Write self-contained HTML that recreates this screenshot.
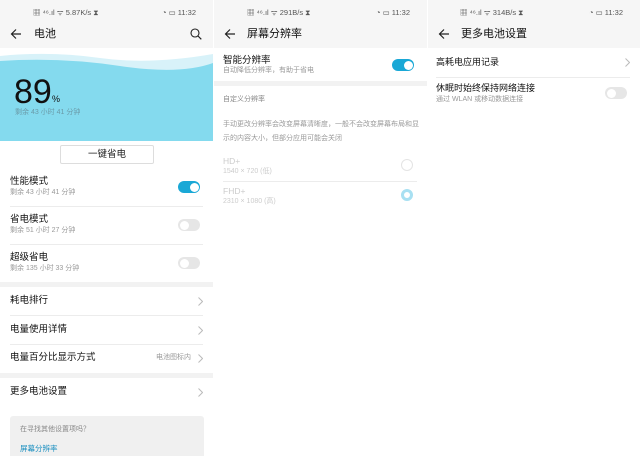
<!DOCTYPE html>
<html><head><meta charset="utf-8"><style>
*{margin:0;padding:0;box-sizing:border-box}
body{width:640px;height:456px;overflow:hidden;background:#fff;font-family:"Liberation Sans","Noto Sans CJK SC",sans-serif;position:relative}
.p{position:absolute;top:0;height:456px;overflow:hidden;background:#fff}
.a{position:absolute;white-space:nowrap;line-height:1.2}
.sb{position:absolute;left:0;right:0;top:0;height:48px;background:#f6f6f6}
.st{font-size:7.5px;color:#555;top:8px}
.t{font-size:9.5px;color:#111}
.s{font-size:7px;color:#999}
.hd{font-size:11px;color:#111;top:28px}
.tg{position:absolute;width:22px;height:12px;border-radius:6px;background:#1aa8d6}
.tg:after{content:"";position:absolute;right:1.5px;top:1.5px;width:9px;height:9px;border-radius:50%;background:#fff}
.tg.off{background:#e6e6e6}
.tg.off:after{right:auto;left:1.5px}
.ln{position:absolute;height:1px;background:#ececec}
.band{position:absolute;left:0;right:0;height:5px;background:#f2f2f2}
.ch{position:absolute;width:5px;height:9px}
.back{position:absolute;left:10px;top:28px;width:12px;height:12px}
</style></head><body>

<!-- Panel 1 -->
<div class="p" style="left:0;width:213px">
<div class="sb"></div>
<div class="a st" style="left:33px">▦ ⁴⁶.ıl ᯤ 5.87K/s ⧗</div>
<div class="a st" style="left:162px">◔ ▭ 11:32</div>
<svg class="back" viewBox="0 0 12 12"><path d="M11 6H1.5M6 1.5L1.5 6 6 10.5" stroke="#222" stroke-width="1.2" fill="none"/></svg>
<div class="a hd" style="left:34px">电池</div>
<svg class="a" style="left:190px;top:28px" width="12" height="12" viewBox="0 0 12 12"><circle cx="5" cy="5" r="4" stroke="#222" stroke-width="1.1" fill="none"/><path d="M8 8l3.3 3.3" stroke="#222" stroke-width="1.2"/></svg>
<svg class="a" style="left:0;top:48px" width="213" height="93" viewBox="0 0 213 93"><rect width="213" height="93" fill="#fff"/><path d="M0 8 Q50 3 100 10 T213 6 V93 H0Z" fill="#d8f2f9"/><path d="M0 13 Q60 9 120 18 T213 15 V93 H0Z" fill="#84daee"/></svg>
<div class="a" style="left:14px;top:72px;font-size:34px;color:#111;line-height:40px">89</div>
<div class="a" style="left:52px;top:94px;font-size:9px;color:#111">%</div>
<div class="a s" style="left:15px;top:109px;color:#6a9aa8">剩余 43 小时 41 分钟</div>
<div class="a" style="left:60px;top:145px;width:94px;height:19px;border:1px solid #ddd;border-radius:2px;font-size:9.5px;text-align:center;line-height:17px;color:#222">一键省电</div>
<div class="a t" style="left:10px;top:176px">性能模式</div><div class="a s" style="left:10px;top:189px">剩余 43 小时 41 分钟</div><div class="tg" style="left:178px;top:181px"></div>
<div class="ln" style="left:10px;right:10px;top:206px"></div>
<div class="a t" style="left:10px;top:214px">省电模式</div><div class="a s" style="left:10px;top:227px">剩余 51 小时 27 分钟</div><div class="tg off" style="left:178px;top:219px"></div>
<div class="ln" style="left:10px;right:10px;top:244px"></div>
<div class="a t" style="left:10px;top:252px">超级省电</div><div class="a s" style="left:10px;top:265px">剩余 135 小时 33 分钟</div><div class="tg off" style="left:178px;top:257px"></div>
<div class="band" style="top:282px"></div>
<div class="a t" style="left:10px;top:295px">耗电排行</div><svg class="ch" style="left:198px;top:297px" viewBox="0 0 5 9"><path d="M.5 .5L4.5 4.5.5 8.5" stroke="#bbb" fill="none"/></svg>
<div class="ln" style="left:10px;right:10px;top:315px"></div>
<div class="a t" style="left:10px;top:324px">电量使用详情</div><svg class="ch" style="left:198px;top:326px" viewBox="0 0 5 9"><path d="M.5 .5L4.5 4.5.5 8.5" stroke="#bbb" fill="none"/></svg>
<div class="ln" style="left:10px;right:10px;top:344px"></div>
<div class="a t" style="left:10px;top:352px">电量百分比显示方式</div><div class="a s" style="left:156px;top:354px">电池图标内</div><svg class="ch" style="left:198px;top:354px" viewBox="0 0 5 9"><path d="M.5 .5L4.5 4.5.5 8.5" stroke="#bbb" fill="none"/></svg>
<div class="band" style="top:373px"></div>
<div class="a t" style="left:10px;top:386px">更多电池设置</div><svg class="ch" style="left:198px;top:388px" viewBox="0 0 5 9"><path d="M.5 .5L4.5 4.5.5 8.5" stroke="#bbb" fill="none"/></svg>
<div class="a" style="left:10px;top:416px;width:194px;height:45px;background:#f0f0f0;border-radius:3px"></div>
<div class="a s" style="left:20px;top:426px;color:#888">在寻找其他设置项吗？</div>
<div class="a" style="left:20px;top:444px;font-size:7.5px;color:#1a8fc0">屏幕分辨率</div>
</div>

<!-- Panel 2 -->
<div class="p" style="left:214px;width:213px">
<div class="sb"></div>
<div class="a st" style="left:33px">▦ ⁴⁶.ıl ᯤ 291B/s ⧗</div>
<div class="a st" style="left:162px">◔ ▭ 11:32</div>
<svg class="back" viewBox="0 0 12 12"><path d="M11 6H1.5M6 1.5L1.5 6 6 10.5" stroke="#222" stroke-width="1.2" fill="none"/></svg>
<div class="a hd" style="left:33px">屏幕分辨率</div>
<div class="a t" style="left:9px;top:55px">智能分辨率</div><div class="a s" style="left:9px;top:67px">自动降低分辨率，有助于省电</div><div class="tg" style="left:178px;top:59px"></div>
<div class="band" style="top:81px"></div>
<div class="a s" style="left:9px;top:96px;color:#888">自定义分辨率</div>
<div class="a s" style="left:9px;top:118px;color:#999;line-height:14px;white-space:normal;width:196px">手动更改分辨率会改变屏幕清晰度，一般不会改变屏幕布局和显示的内容大小，但部分应用可能会关闭</div>
<div class="a" style="left:9px;top:156px;font-size:8.5px;color:#ccc">HD+</div><div class="a s" style="left:9px;top:168px;color:#ccc">1540 × 720 (低)</div>
<div class="a" style="left:187px;top:159px;width:12px;height:12px;border:1px solid #e4e4e4;border-radius:50%"></div>
<div class="ln" style="left:9px;right:10px;top:181px"></div>
<div class="a" style="left:9px;top:186px;font-size:8.5px;color:#ccc">FHD+</div><div class="a s" style="left:9px;top:198px;color:#ccc">2310 × 1080 (高)</div>
<div class="a" style="left:187px;top:189px;width:12px;height:12px;border:3px solid #a8e0f2;border-radius:50%"></div>
</div>

<!-- Panel 3 -->
<div class="p" style="left:428px;width:212px">
<div class="sb"></div>
<div class="a st" style="left:32px">▦ ⁴⁶.ıl ᯤ 314B/s ⧗</div>
<div class="a st" style="left:161px">◔ ▭ 11:32</div>
<svg class="back" viewBox="0 0 12 12"><path d="M11 6H1.5M6 1.5L1.5 6 6 10.5" stroke="#222" stroke-width="1.2" fill="none"/></svg>
<div class="a hd" style="left:33px">更多电池设置</div>
<div class="a t" style="left:8px;top:57px;font-size:9px">高耗电应用记录</div><svg class="ch" style="left:197px;top:58px" viewBox="0 0 5 9"><path d="M.5 .5L4.5 4.5.5 8.5" stroke="#bbb" fill="none"/></svg>
<div class="ln" style="left:8px;right:10px;top:77px"></div>
<div class="a t" style="left:8px;top:83px;font-size:9px">休眠时始终保持网络连接</div><div class="a s" style="left:8px;top:96px">通过 WLAN 或移动数据连接</div>
<div class="tg off" style="left:177px;top:87px"></div>
</div>
</body></html>
